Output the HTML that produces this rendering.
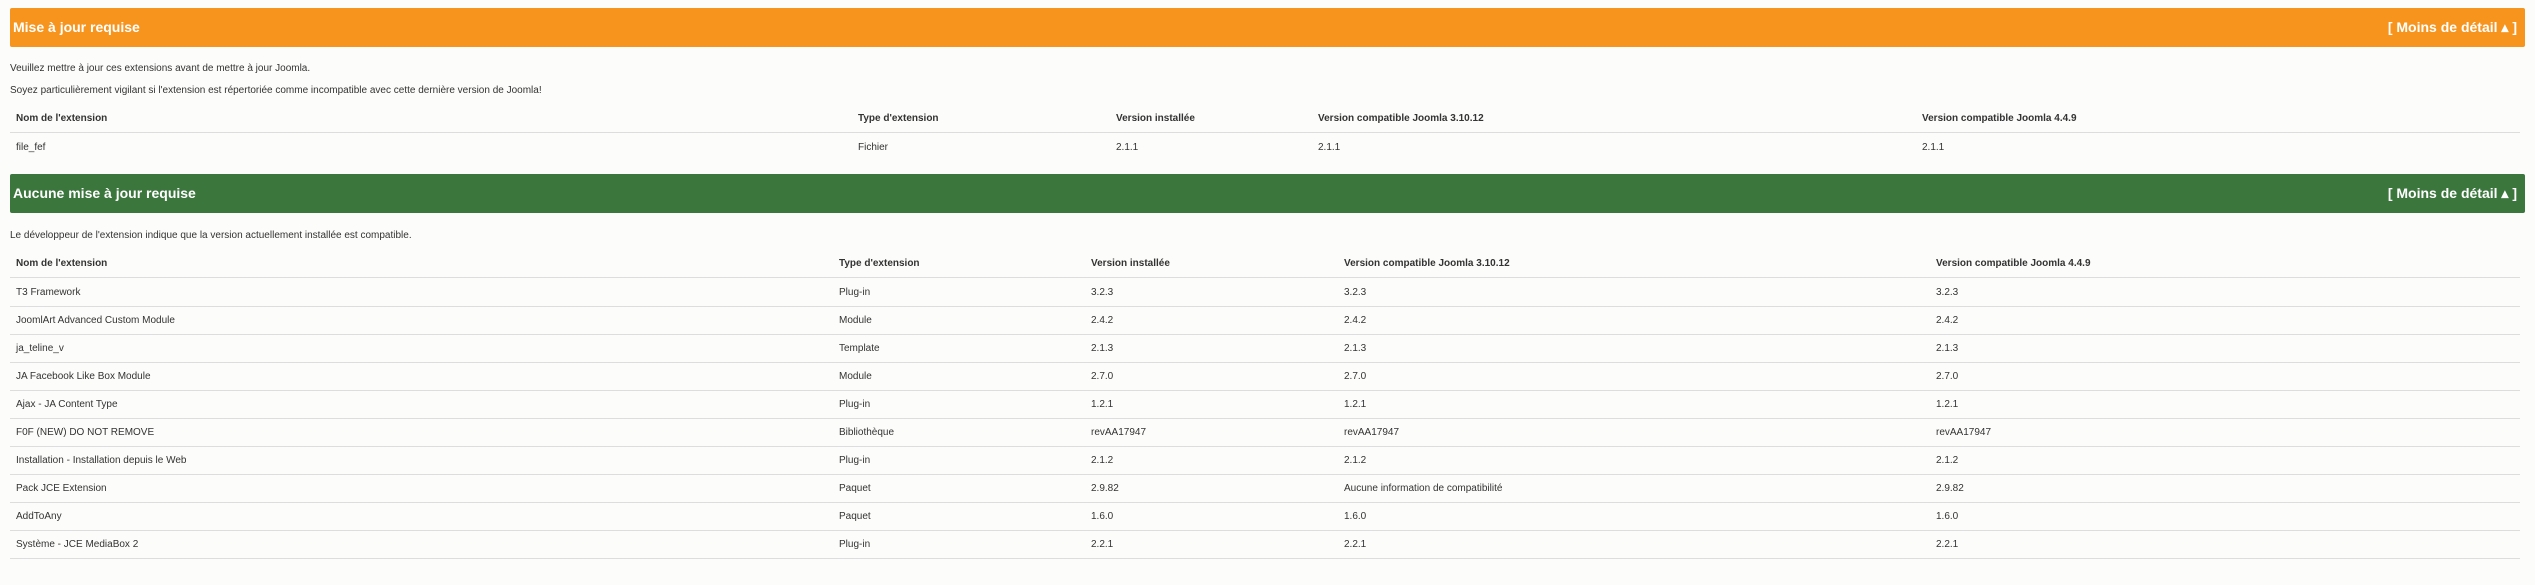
<!DOCTYPE html>
<html><head><meta charset="utf-8"><style>
body{margin:0;width:2535px;height:585px;background:#fcfcfa;font-family:"Liberation Sans",sans-serif;color:#333;font-size:10px;position:relative;overflow:hidden}
.bar{position:absolute;left:10px;width:2515px;height:39px;color:#fff;font-weight:bold;font-size:14px;line-height:39px;border-radius:2px}
.bar .t{position:absolute;left:3px}
.bar .r{position:absolute;right:8px;font-size:14px}
.p{position:absolute;left:10px;font-size:10px}
.row{position:absolute;left:10px;width:2510px;height:28px;border-bottom:1px solid #ddd}
.row span{position:absolute;top:9px}
.h span{font-weight:bold}
</style></head><body>
<div class="bar" style="top:8px;background:#f7941d"><span class="t">Mise à jour requise</span><span class="r">[ Moins de détail ▴ ]</span></div>
<div class="p" style="top:63px">Veuillez mettre à jour ces extensions avant de mettre à jour Joomla.</div>
<div class="p" style="top:85px">Soyez particulièrement vigilant si l'extension est répertoriée comme incompatible avec cette dernière version de Joomla!</div>
<div class="row h" style="top:104px"><span style="left:6px">Nom de l'extension</span><span style="left:848px">Type d'extension</span><span style="left:1106px">Version installée</span><span style="left:1308px">Version compatible Joomla 3.10.12</span><span style="left:1912px">Version compatible Joomla 4.4.9</span></div>
<div class="row" style="top:133px;border:none"><span style="left:6px">file_fef</span><span style="left:848px">Fichier</span><span style="left:1106px">2.1.1</span><span style="left:1308px">2.1.1</span><span style="left:1912px">2.1.1</span></div>
<div class="bar" style="top:174px;background:#3b763d"><span class="t">Aucune mise à jour requise</span><span class="r">[ Moins de détail ▴ ]</span></div>
<div class="p" style="top:230px">Le développeur de l'extension indique que la version actuellement installée est compatible.</div>
<div class="row h" style="top:249px"><span style="left:6px">Nom de l'extension</span><span style="left:829px">Type d'extension</span><span style="left:1081px">Version installée</span><span style="left:1334px">Version compatible Joomla 3.10.12</span><span style="left:1926px">Version compatible Joomla 4.4.9</span></div>
<div class="row" style="top:278px"><span style="left:6px">T3 Framework</span><span style="left:829px">Plug-in</span><span style="left:1081px">3.2.3</span><span style="left:1334px">3.2.3</span><span style="left:1926px">3.2.3</span></div>
<div class="row" style="top:306px"><span style="left:6px">JoomlArt Advanced Custom Module</span><span style="left:829px">Module</span><span style="left:1081px">2.4.2</span><span style="left:1334px">2.4.2</span><span style="left:1926px">2.4.2</span></div>
<div class="row" style="top:334px"><span style="left:6px">ja_teline_v</span><span style="left:829px">Template</span><span style="left:1081px">2.1.3</span><span style="left:1334px">2.1.3</span><span style="left:1926px">2.1.3</span></div>
<div class="row" style="top:362px"><span style="left:6px">JA Facebook Like Box Module</span><span style="left:829px">Module</span><span style="left:1081px">2.7.0</span><span style="left:1334px">2.7.0</span><span style="left:1926px">2.7.0</span></div>
<div class="row" style="top:390px"><span style="left:6px">Ajax - JA Content Type</span><span style="left:829px">Plug-in</span><span style="left:1081px">1.2.1</span><span style="left:1334px">1.2.1</span><span style="left:1926px">1.2.1</span></div>
<div class="row" style="top:418px"><span style="left:6px">F0F (NEW) DO NOT REMOVE</span><span style="left:829px">Bibliothèque</span><span style="left:1081px">revAA17947</span><span style="left:1334px">revAA17947</span><span style="left:1926px">revAA17947</span></div>
<div class="row" style="top:446px"><span style="left:6px">Installation - Installation depuis le Web</span><span style="left:829px">Plug-in</span><span style="left:1081px">2.1.2</span><span style="left:1334px">2.1.2</span><span style="left:1926px">2.1.2</span></div>
<div class="row" style="top:474px"><span style="left:6px">Pack JCE Extension</span><span style="left:829px">Paquet</span><span style="left:1081px">2.9.82</span><span style="left:1334px">Aucune information de compatibilité</span><span style="left:1926px">2.9.82</span></div>
<div class="row" style="top:502px"><span style="left:6px">AddToAny</span><span style="left:829px">Paquet</span><span style="left:1081px">1.6.0</span><span style="left:1334px">1.6.0</span><span style="left:1926px">1.6.0</span></div>
<div class="row" style="top:530px"><span style="left:6px">Système - JCE MediaBox 2</span><span style="left:829px">Plug-in</span><span style="left:1081px">2.2.1</span><span style="left:1334px">2.2.1</span><span style="left:1926px">2.2.1</span></div>
</body></html>
